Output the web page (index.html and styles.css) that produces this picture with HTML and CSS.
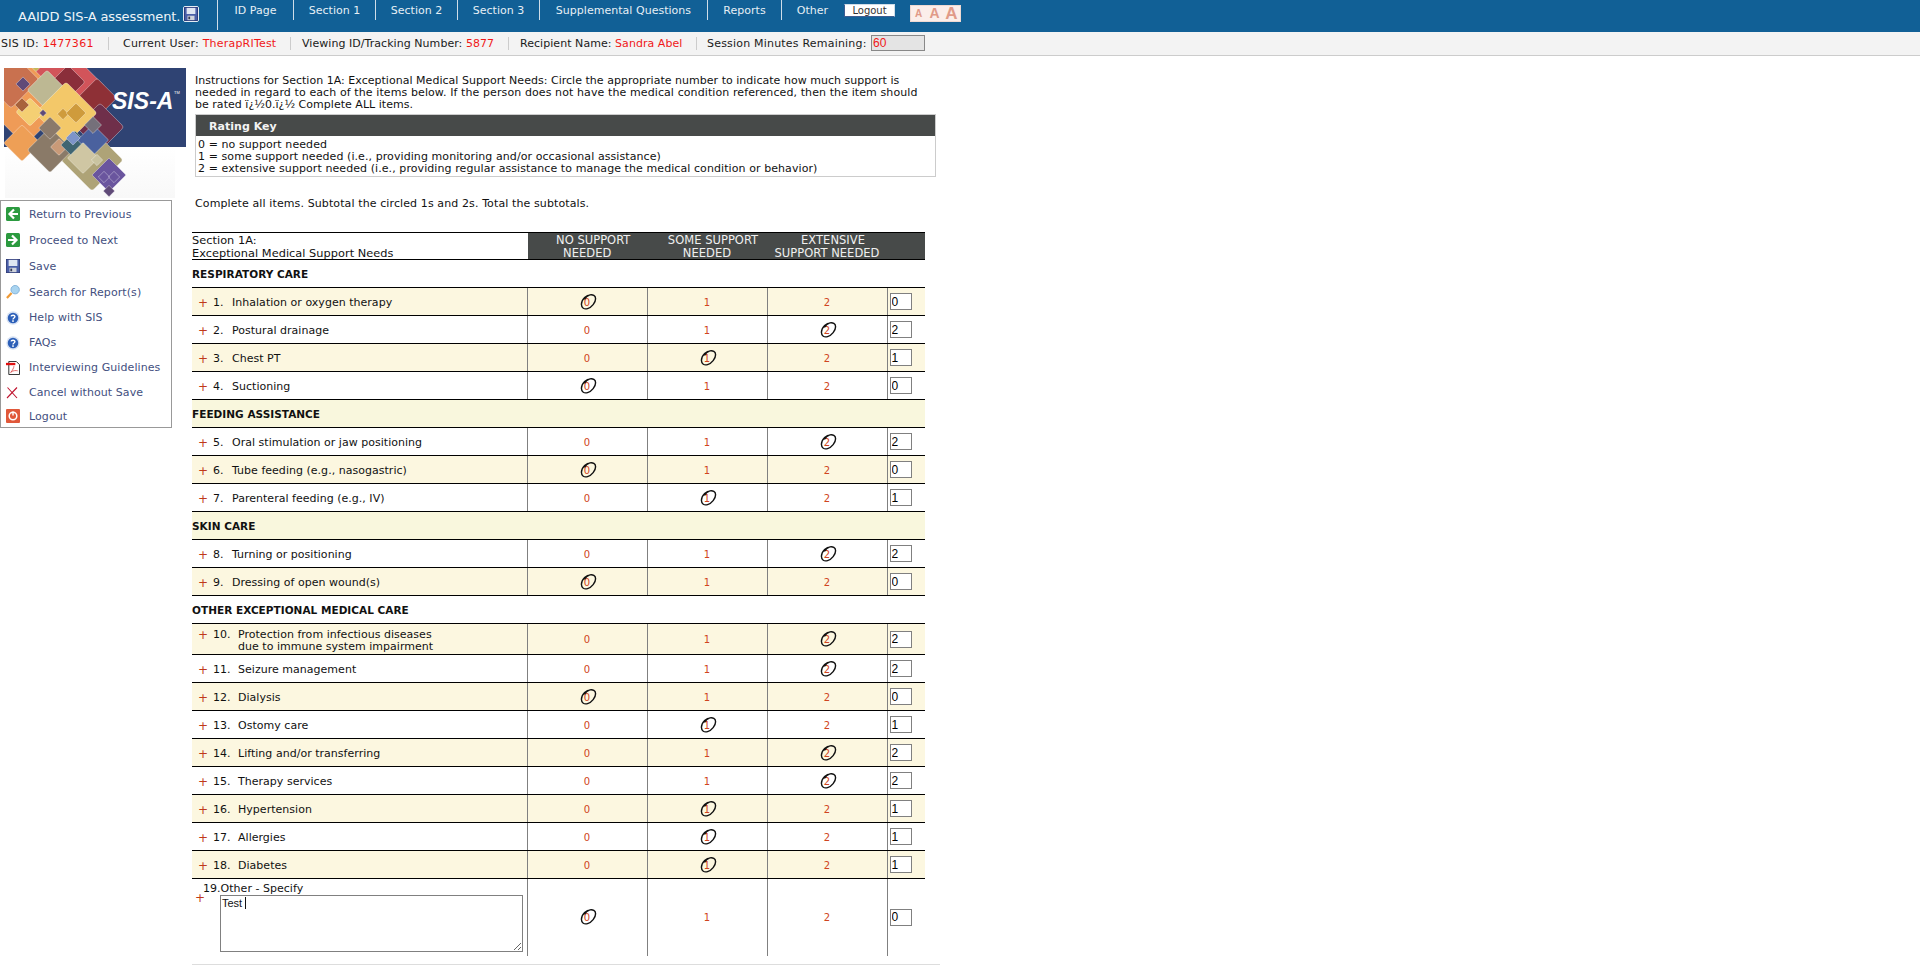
FILE: index.html
```html
<!DOCTYPE html>
<html lang="en">
<head>
<meta charset="utf-8">
<title>SIS-A Section 1A</title>
<link rel="stylesheet" href="styles.css">
</head>
<body>
<svg class="defs" width="0" height="0" aria-hidden="true">
  <symbol id="ring" viewBox="0 0 18 18">
    <path d="M12 1.500C7 .8 1.600 6 1.500 11.500 1.500 15.500 4.500 17 8 16 12.500 14.800 16.500 9.500 16.500 5.500 16.500 2.300 13.500 .8 10.500 1.500 8 2.200 6 4 4.800 6" fill="none" stroke="#111" stroke-width="1.500"/>
  </symbol>
  <symbol id="floppy" viewBox="0 0 16 16">
    <rect x=".5" y=".5" width="15" height="15" fill="#4a5fa8" stroke="#2d3a78"/>
    <rect x="3" y="1" width="10" height="7" fill="#dfe6f2"/>
    <rect x="4" y="10" width="8" height="5" fill="#cfd3dc"/>
    <rect x="5" y="11" width="2" height="3" fill="#333a55"/>
  </symbol>
  <symbol id="help" viewBox="0 0 16 16">
    <circle cx="8" cy="8" r="7.600" fill="#d5e0f2"/>
    <circle cx="8" cy="8" r="6" fill="#2c5fb8"/>
    <path d="M5.800 6.200C6 4.600 10.200 4.200 10.200 6.400 10.200 8 8 8 8 9.600" fill="none" stroke="#fff" stroke-width="1.600"/>
    <rect x="7.100" y="10.600" width="1.800" height="1.800" fill="#fff"/>
  </symbol>
</svg>

<header class="topbar">
  <div class="brand">AAIDD SIS-A assessment.<svg class="brand-icon"><use href="#floppy"/></svg></div>
  <nav class="nav">
    <a class="nav-item n1">ID Page</a>
    <a class="nav-item n2">Section 1</a>
    <a class="nav-item n2">Section 2</a>
    <a class="nav-item n2">Section 3</a>
    <a class="nav-item n3">Supplemental Questions</a>
    <a class="nav-item n4">Reports</a>
    <a class="nav-item n5">Other</a>
  </nav>
  <button class="logout-btn" type="button">Logout</button>
  <div class="sizes"><span class="sz s1">A</span><span class="sz s2">A</span><span class="sz s3">A</span></div>
</header>

<div class="infobar">
  <span class="info i1">SIS ID: <b>1477361</b></span>
  <span class="info i2">Current User: <b>TherapRITest</b></span>
  <span class="info i3">Viewing ID/Tracking Number: <b>5877</b></span>
  <span class="info i4">Recipient Name: <b>Sandra Abel</b></span>
  <span class="info i5">Session Minutes Remaining:</span>
  <input class="minutes" type="text" value="60" readonly>
</div>

<div class="page">
  <aside class="side">
    <svg class="logo" viewBox="0 0 182 130" width="182" height="130" role="img" aria-label="SIS-A logo">
      <defs>
        <linearGradient id="fade" x1="0" y1="0" x2="0" y2="1"><stop offset="0" stop-color="#fff"/><stop offset="1" stop-color="#f8f8f8"/></linearGradient>
      </defs>
      <rect x="1" y="79" width="170" height="51" fill="url(#fade)"/>
      <rect width="182" height="79" fill="#2f4373"/>
      <g stroke="#fff" stroke-opacity=".55" stroke-width=".6">
        <rect x="-14" y="-14" width="28" height="28" rx="3" transform="translate(28 4) rotate(45)" fill="#c5b85a"/>
        <rect x="-30" y="-30" width="60" height="60" rx="3" transform="translate(59 19) rotate(45)" fill="#d2545a"/>
        <rect x="-30" y="-30" width="60" height="60" rx="3" transform="translate(21 35) rotate(45)" fill="#ef9b57"/>
        <rect x="-20" y="-20" width="40" height="40" rx="3" transform="translate(7 12) rotate(45)" fill="#c9714f"/>
        <rect x="-5" y="-5" width="10" height="10" transform="translate(19 16) rotate(45)" fill="#5f4a78"/>
        <rect x="-12" y="-12" width="24" height="24" rx="2" transform="translate(64 14) rotate(45)" fill="#8a2e3a"/>
        <rect x="-14" y="-14" width="28" height="28" rx="2" transform="translate(93 30) rotate(45)" fill="#8e3036"/>
        <rect x="-14" y="-14" width="28" height="28" rx="2" transform="translate(43 22) rotate(45)" fill="#bdb893"/>
        <rect x="-17" y="-17" width="34" height="34" rx="3" transform="translate(96 59) rotate(45)" fill="#6f2f4a"/>
        <rect x="-22" y="-22" width="44" height="44" rx="3" transform="translate(62 45) rotate(45)" fill="#f3c869"/>
        <rect x="-10" y="-10" width="20" height="20" rx="2" transform="translate(26 44) rotate(45)" fill="#f4cf73"/>
        <rect x="-5" y="-5" width="10" height="10" transform="translate(18 37) rotate(45)" fill="#a8623c"/>
        <rect x="-2.500" y="-2.500" width="5" height="5" transform="translate(39 45) rotate(45)" fill="#5f4a78"/>
        <rect x="-4" y="-4" width="8" height="8" transform="translate(59 46) rotate(45)" fill="#cf9b3c"/>
        <rect x="-7" y="-7" width="14" height="14" rx="1" transform="translate(72 45) rotate(45)" fill="#cf9b3c"/>
        <rect x="-13" y="-13" width="26" height="26" rx="2" transform="translate(18 75) rotate(45)" fill="#ee9f56"/>
        <rect x="-22" y="-22" width="44" height="44" rx="3" transform="translate(88 92) rotate(45)" fill="#aea377"/>
        <rect x="-16" y="-16" width="32" height="32" rx="2" transform="translate(46 82) rotate(45)" fill="#8a7a68"/>
        <rect x="-8" y="-8" width="16" height="16" rx="1" transform="translate(46 60) rotate(45)" fill="#8b7a6b"/>
        <rect x="-6" y="-6" width="12" height="12" rx="1" transform="translate(55 79) rotate(45)" fill="#c99a78"/>
        <rect x="-10" y="-10" width="20" height="20" rx="1" transform="translate(71 77) rotate(45)" fill="#3f6572"/>
        <rect x="-11" y="-11" width="22" height="22" rx="1" transform="translate(89 72) rotate(45)" fill="#4a619e"/>
        <rect x="-5" y="-5" width="10" height="10" transform="translate(69 70) rotate(45)" fill="#7d94c9"/>
        <rect x="-6" y="-6" width="12" height="12" transform="translate(89 57) rotate(45)" fill="#75707a"/>
        <rect x="-11" y="-11" width="22" height="22" rx="1" transform="translate(79 90) rotate(45)" fill="#cfc6a3"/>
        <rect x="-4" y="-4" width="8" height="8" transform="translate(93 92) rotate(45)" fill="#c9c3a0"/>
        <rect x="-12" y="-12" width="24" height="24" rx="1" transform="translate(105 107) rotate(45)" fill="#6a559e"/>
        <rect x="-4" y="-4" width="8" height="8" transform="translate(100 109) rotate(45)" fill="none"/>
        <rect x="-4" y="-4" width="8" height="8" transform="translate(110 109) rotate(45)" fill="none"/>
        <rect x="-4" y="-4" width="8" height="8" transform="translate(105 123) rotate(45)" fill="#5f4a78"/>
      </g>
      <text x="108" y="41" class="logo-text">SIS-A</text>
      <text x="170" y="26" class="logo-tm">TM</text>
    </svg>
    <ul class="menu">
      <li class="m-item tall"><svg class="m-icon" viewBox="0 0 14 14"><rect width="14" height="14" rx="1.500" fill="#2b9a3f"/><path d="M8 2.500 3.500 7 8 11.500M4 7h8" fill="none" stroke="#fff" stroke-width="2.200"/></svg>Return to Previous</li>
      <li class="m-item tall"><svg class="m-icon" viewBox="0 0 14 14"><rect width="14" height="14" rx="1.500" fill="#2b9a3f"/><path d="M6 2.500 10.500 7 6 11.500M10 7H2" fill="none" stroke="#fff" stroke-width="2.200"/></svg>Proceed to Next</li>
      <li class="m-item tall"><svg class="m-icon"><use href="#floppy"/></svg>Save</li>
      <li class="m-item tall"><svg class="m-icon" viewBox="0 0 15 15"><path d="M1 14 6 8.500" stroke="#ef9a36" stroke-width="2.400"/><circle cx="9.800" cy="5" r="4.500" fill="#a9d4f0" stroke="#7fb0d8"/></svg>Search for Report(s)</li>
      <li class="m-item mid"><svg class="m-icon"><use href="#help"/></svg>Help with SIS</li>
      <li class="m-item mid"><svg class="m-icon"><use href="#help"/></svg>FAQs</li>
      <li class="m-item mid"><svg class="m-icon" viewBox="0 0 15 15"><path d="M3 .5H11L14.500 4V14.500H3Z" fill="#fff" stroke="#222"/><rect y="2" width="10" height="2.500" fill="#e01010"/><path d="M5 12.500C7 10 8.500 7 8.500 5.500M5 12C8 10 10.500 10 12.500 10.500" fill="none" stroke="#e05050" stroke-width=".9"/></svg>Interviewing Guidelines</li>
      <li class="m-item mid"><svg class="m-icon" viewBox="0 0 14 14"><path d="M1.500 1.500 11 12M11 1.500 1 12" fill="none" stroke="#c01530" stroke-width="1.100"/></svg>Cancel without Save</li>
      <li class="m-item last"><svg class="m-icon" viewBox="0 0 14 14"><rect width="14" height="14" rx="1" fill="#e0583a"/><circle cx="7" cy="7" r="3.800" fill="none" stroke="#fff" stroke-width="1.500"/><path d="M7 2.500V6.500" stroke="#fff" stroke-width="1.400"/></svg>Logout</li>
    </ul>
  </aside>

  <main class="content">
    <p class="intro">Instructions for Section 1A: Exceptional Medical Support Needs: Circle the appropriate number to indicate how much support is<br><span class="intro-wide">needed in regard to each of the items below. If the person does not have the medical condition referenced, then the item should</span><br>be rated ï¿½0.ï¿½ Complete ALL items.</p>
    <section class="key">
      <h2 class="key-head">Rating Key</h2>
      <div class="key-body">0 = no support needed<br>1 = some support needed (i.e., providing monitoring and/or occasional assistance)<br>2 = extensive support needed (i.e., providing regular assistance to manage the medical condition or behavior)</div>
    </section>
    <p class="complete">Complete all items. Subtotal the circled 1s and 2s. Total the subtotals.</p>

    <table class="grid">
      <colgroup><col class="c-label"><col class="c-opt"><col class="c-opt"><col class="c-opt"><col class="c-sub"></colgroup>
      <thead>
        <tr class="head">
          <th class="h-title">Section 1A:<br>Exceptional Medical Support Needs</th>
          <th class="h-first"><span class="lead">NO SUPPORT</span><br>NEEDED</th><th><span class="lead">SOME SUPPORT</span><br>NEEDED</th><th><span class="lead">EXTENSIVE</span><br>SUPPORT NEEDED</th><th></th>
        </tr>
      </thead>
      <tbody>
        <tr class="sec"><td colspan="5">RESPIRATORY CARE</td></tr>
        <tr class="row alt"><td class="lab"><span class="plus">+</span><span class="no">1.</span><span>Inhalation or oxygen therapy</span></td><td class="opt"><span class="num on">0<svg class="ring"><use href="#ring"/></svg></span></td><td class="opt"><span class="num">1</span></td><td class="opt"><span class="num">2</span></td><td class="sub"><input class="subtotal" type="text" value="0"></td></tr>
        <tr class="row"><td class="lab"><span class="plus">+</span><span class="no">2.</span><span>Postural drainage</span></td><td class="opt"><span class="num">0</span></td><td class="opt"><span class="num">1</span></td><td class="opt"><span class="num on">2<svg class="ring"><use href="#ring"/></svg></span></td><td class="sub"><input class="subtotal" type="text" value="2"></td></tr>
        <tr class="row alt"><td class="lab"><span class="plus">+</span><span class="no">3.</span><span>Chest PT</span></td><td class="opt"><span class="num">0</span></td><td class="opt"><span class="num on">1<svg class="ring"><use href="#ring"/></svg></span></td><td class="opt"><span class="num">2</span></td><td class="sub"><input class="subtotal" type="text" value="1"></td></tr>
        <tr class="row"><td class="lab"><span class="plus">+</span><span class="no">4.</span><span>Suctioning</span></td><td class="opt"><span class="num on">0<svg class="ring"><use href="#ring"/></svg></span></td><td class="opt"><span class="num">1</span></td><td class="opt"><span class="num">2</span></td><td class="sub"><input class="subtotal" type="text" value="0"></td></tr>
        <tr class="sec alt2"><td colspan="5">FEEDING ASSISTANCE</td></tr>
        <tr class="row"><td class="lab"><span class="plus">+</span><span class="no">5.</span><span>Oral stimulation or jaw positioning</span></td><td class="opt"><span class="num">0</span></td><td class="opt"><span class="num">1</span></td><td class="opt"><span class="num on">2<svg class="ring"><use href="#ring"/></svg></span></td><td class="sub"><input class="subtotal" type="text" value="2"></td></tr>
        <tr class="row alt"><td class="lab"><span class="plus">+</span><span class="no">6.</span><span>Tube feeding (e.g., nasogastric)</span></td><td class="opt"><span class="num on">0<svg class="ring"><use href="#ring"/></svg></span></td><td class="opt"><span class="num">1</span></td><td class="opt"><span class="num">2</span></td><td class="sub"><input class="subtotal" type="text" value="0"></td></tr>
        <tr class="row"><td class="lab"><span class="plus">+</span><span class="no">7.</span><span>Parenteral feeding (e.g., IV)</span></td><td class="opt"><span class="num">0</span></td><td class="opt"><span class="num on">1<svg class="ring"><use href="#ring"/></svg></span></td><td class="opt"><span class="num">2</span></td><td class="sub"><input class="subtotal" type="text" value="1"></td></tr>
        <tr class="sec alt2"><td colspan="5">SKIN CARE</td></tr>
        <tr class="row"><td class="lab"><span class="plus">+</span><span class="no">8.</span><span>Turning or positioning</span></td><td class="opt"><span class="num">0</span></td><td class="opt"><span class="num">1</span></td><td class="opt"><span class="num on">2<svg class="ring"><use href="#ring"/></svg></span></td><td class="sub"><input class="subtotal" type="text" value="2"></td></tr>
        <tr class="row alt"><td class="lab"><span class="plus">+</span><span class="no">9.</span><span>Dressing of open wound(s)</span></td><td class="opt"><span class="num on">0<svg class="ring"><use href="#ring"/></svg></span></td><td class="opt"><span class="num">1</span></td><td class="opt"><span class="num">2</span></td><td class="sub"><input class="subtotal" type="text" value="0"></td></tr>
        <tr class="sec"><td colspan="5">OTHER EXCEPTIONAL MEDICAL CARE</td></tr>
        <tr class="row alt two"><td class="lab"><span class="plus">+</span><span class="no wide">10.</span><span>Protection from infectious diseases<br>due to immune system impairment</span></td><td class="opt"><span class="num">0</span></td><td class="opt"><span class="num">1</span></td><td class="opt"><span class="num on">2<svg class="ring"><use href="#ring"/></svg></span></td><td class="sub"><input class="subtotal" type="text" value="2"></td></tr>
        <tr class="row"><td class="lab"><span class="plus">+</span><span class="no wide">11.</span><span>Seizure management</span></td><td class="opt"><span class="num">0</span></td><td class="opt"><span class="num">1</span></td><td class="opt"><span class="num on">2<svg class="ring"><use href="#ring"/></svg></span></td><td class="sub"><input class="subtotal" type="text" value="2"></td></tr>
        <tr class="row alt"><td class="lab"><span class="plus">+</span><span class="no wide">12.</span><span>Dialysis</span></td><td class="opt"><span class="num on">0<svg class="ring"><use href="#ring"/></svg></span></td><td class="opt"><span class="num">1</span></td><td class="opt"><span class="num">2</span></td><td class="sub"><input class="subtotal" type="text" value="0"></td></tr>
        <tr class="row"><td class="lab"><span class="plus">+</span><span class="no wide">13.</span><span>Ostomy care</span></td><td class="opt"><span class="num">0</span></td><td class="opt"><span class="num on">1<svg class="ring"><use href="#ring"/></svg></span></td><td class="opt"><span class="num">2</span></td><td class="sub"><input class="subtotal" type="text" value="1"></td></tr>
        <tr class="row alt"><td class="lab"><span class="plus">+</span><span class="no wide">14.</span><span>Lifting and/or transferring</span></td><td class="opt"><span class="num">0</span></td><td class="opt"><span class="num">1</span></td><td class="opt"><span class="num on">2<svg class="ring"><use href="#ring"/></svg></span></td><td class="sub"><input class="subtotal" type="text" value="2"></td></tr>
        <tr class="row"><td class="lab"><span class="plus">+</span><span class="no wide">15.</span><span>Therapy services</span></td><td class="opt"><span class="num">0</span></td><td class="opt"><span class="num">1</span></td><td class="opt"><span class="num on">2<svg class="ring"><use href="#ring"/></svg></span></td><td class="sub"><input class="subtotal" type="text" value="2"></td></tr>
        <tr class="row alt"><td class="lab"><span class="plus">+</span><span class="no wide">16.</span><span>Hypertension</span></td><td class="opt"><span class="num">0</span></td><td class="opt"><span class="num on">1<svg class="ring"><use href="#ring"/></svg></span></td><td class="opt"><span class="num">2</span></td><td class="sub"><input class="subtotal" type="text" value="1"></td></tr>
        <tr class="row"><td class="lab"><span class="plus">+</span><span class="no wide">17.</span><span>Allergies</span></td><td class="opt"><span class="num">0</span></td><td class="opt"><span class="num on">1<svg class="ring"><use href="#ring"/></svg></span></td><td class="opt"><span class="num">2</span></td><td class="sub"><input class="subtotal" type="text" value="1"></td></tr>
        <tr class="row alt"><td class="lab"><span class="plus">+</span><span class="no wide">18.</span><span>Diabetes</span></td><td class="opt"><span class="num">0</span></td><td class="opt"><span class="num on">1<svg class="ring"><use href="#ring"/></svg></span></td><td class="opt"><span class="num">2</span></td><td class="sub"><input class="subtotal" type="text" value="1"></td></tr>
        <tr class="row other">
          <td class="lab-other">
            <span class="plus">+</span>
            <div class="other-box">
              <div class="other-title">19.Other - Specify</div>
              <div class="ta-wrap"><textarea class="specify">Test</textarea><span class="caret"></span></div>
            </div>
          </td>
          <td class="opt"><span class="num on">0<svg class="ring"><use href="#ring"/></svg></span></td><td class="opt"><span class="num">1</span></td><td class="opt"><span class="num">2</span></td><td class="sub"><input class="subtotal" type="text" value="0"></td>
        </tr>
      </tbody>
    </table>
    <div class="endline"></div>
  </main>
</div>
</body>
</html>
```

FILE: styles.css
```css
* { box-sizing: border-box; }
html, body { margin: 0; padding: 0; }
body {
  height: 966px;
  overflow: hidden;
  background: #fff;
  color: #111;
  font-family: "DejaVu Sans", Verdana, sans-serif;
  font-size: 11px;
  letter-spacing: .025px;
}
.defs { position: absolute; }

/* top bar */
.topbar {
  height: 32px;
  background: #116096;
  color: #fff;
  display: flex;
  align-items: flex-start;
}
.brand {
  width: 217px;
  padding: 8px 0 0 18px;
  font-size: 13px;
  letter-spacing: -.12px;
  line-height: 18px;
  color: #eef4f8;
  display: flex;
  white-space: nowrap;
}
.brand-icon {
  width: 16px;
  height: 16px;
  margin: -2px 0 0 3px;
  flex: none;
  border: 1px solid #e4ecf3;
  border-radius: 2px;
}
.nav { display: flex; }
.nav-item {
  height: 20px;
  padding-top: 1px;
  line-height: 19px;
  border-left: 1px solid #cfdde8;
  text-align: center;
  color: #e6eff5;
  white-space: nowrap;
}
.nav-item:first-child { height: 30px; }
.n1 { width: 76px; }
.n2 { width: 82px; }
.n3 { width: 168px; }
.n4 { width: 74px; }
.n5 { width: 62px; }
.logout-btn {
  width: 51px;
  height: 13px;
  margin: 4px 0 0 1px;
  padding: 0;
  background: #fff;
  border: 1px solid #3d5d92;
  border-right-color: #cfdde8;
  border-top-color: #cfdde8;
  font: 10px/11px "DejaVu Sans", sans-serif;
  color: #333;
}
.sizes {
  display: flex;
  align-items: flex-end;
  margin: 5px 0 0 15px;
  width: 51px;
  height: 17px;
  background: #fbeeea;
  border: 1px solid #eed9d2;
  font-family: "Liberation Sans", sans-serif;
  font-weight: bold;
  color: #e09a88;
}
.sz { display: block; text-align: center; line-height: 15px; }
.s1 { width: 15px; font-size: 10px; }
.s2 { width: 17px; font-size: 14px; }
.s3 { width: 17px; font-size: 17px; }

/* info bar */
.infobar {
  height: 24px;
  background: #f3f3f3;
  border-bottom: 1px solid #ccc;
  display: flex;
  align-items: center;
  white-space: nowrap;
}
.info {
  height: 13px;
  line-height: 13px;
  color: #1a1a1a;
  border-right: 1px solid #ccc;
}
.info b { font-weight: normal; color: #f01818; }
.i1 { width: 109px; padding-left: 1px; letter-spacing: .27px; }
.i2 { width: 182px; padding-left: 14px; letter-spacing: .2px; }
.i3 { width: 218px; padding-left: 11px; letter-spacing: .05px; }
.i4 { width: 188px; padding-left: 11px; letter-spacing: .05px; }
.i5 { width: 174px; padding-left: 10px; border-right: 0; letter-spacing: .2px; }
.minutes {
  width: 54px;
  height: 16px;
  margin-top: -1px;
  padding: 0 1px;
  background: #e4e4e4;
  border: 1px solid #888;
  color: #f01818;
  font: 12px "Liberation Sans", sans-serif;
}

/* page */
.page { display: flex; align-items: flex-start; }
.side { width: 192px; flex: none; padding-top: 12px; }
.logo { display: block; margin-left: 4px; }
.logo-text { font: italic bold 23px "Liberation Sans", sans-serif; fill: #fff; }
.logo-tm { font: 4px "Liberation Sans", sans-serif; fill: #fff; }
.menu {
  list-style: none;
  width: 172px;
  margin: 2px 0 0;
  padding: 0;
  background: #fff;
  border: 1px solid #999;
  color: #434f80;
  letter-spacing: .08px;
  white-space: nowrap;
}
.m-item { display: flex; align-items: center; padding-left: 5px; }
.tall { height: 26px; }
.mid { height: 25px; }
.last { height: 22px; }
.m-icon { width: 14px; height: 14px; margin: 0 9px 0 0; flex: none; }

/* content */
.content { width: 760px; padding-top: 19px; }
.intro {
  margin: 0 0 0 3px;
  line-height: 12px;
  white-space: nowrap;
}
.intro-wide { letter-spacing: .1px; }
.key {
  width: 741px;
  height: 63px;
  margin: 3px 0 0 3px;
  border: 1px solid #ccc;
}
.key-head {
  margin: 0;
  height: 21px;
  padding-left: 13px;
  background: #474a49;
  color: #f4f4f4;
  font-size: 11px;
  font-weight: bold;
  line-height: 23px;
}
.key-body {
  padding: 3px 0 0 2px;
  line-height: 12px;
  letter-spacing: .08px;
  white-space: nowrap;
}
.complete {
  margin: 21px 0 0 3px;
  line-height: 12px;
  letter-spacing: .11px;
}

/* table */
.grid {
  width: 733px;
  margin-top: 22px;
  table-layout: fixed;
  border-collapse: collapse;
}
.c-label { width: 335px; }
.c-opt { width: 120px; }
.c-sub { width: 38px; }
.head th {
  padding: 1px 0 0;
  background: #474a49;
  color: #f0f0f0;
  font-size: 11.500px;
  font-weight: normal;
  line-height: 12.500px;
  border-top: 1px solid #000;
  border-bottom: 1px solid #000;
  vertical-align: middle;
  white-space: nowrap;
}
.head .h-title {
  background: #fff;
  color: #111;
  text-align: left;
  font-size: 11.350px;
}
.head .h-first { border-left: 1px solid #fff; }
.lead { padding-left: 12px; }
.sec { height: 28px; }
.sec td {
  padding: 1px 0 0;
  border-bottom: 1px solid #000;
  font-weight: bold;
  font-size: 10.500px;
}
.alt2 td { background: #f9f7dd; }
.row { height: 28px; }
.row td { border-bottom: 1px solid #000; padding: 0; }
.row td.lab { padding-top: 3px; }
.row td.opt { padding-top: 1px; }
.alt td { background: #fcf7e0; }
.row.two { height: 31px; }
.lab { white-space: nowrap; }
.lab > span { display: inline-block; vertical-align: top; line-height: 12px; }
.plus {
  width: 21px;
  padding-left: 6px;
  color: #c0391b;
  font-size: 12px;
  line-height: 12px;
}
.no { width: 19px; }
.no.wide { width: 25px; }
.opt { text-align: center; border-left: 1px solid #808080; }
.num { position: relative; display: inline-block; color: #cf4420; font-size: 10px; line-height: 12px; }
.ring {
  position: absolute;
  left: 50%;
  top: 50%;
  width: 17px;
  height: 18px;
  margin: -10px 0 0 -7px;
}
.sub { border-left: 1px solid #808080; }
.subtotal {
  display: block;
  width: 22px;
  height: 17px;
  margin: 0 0 0 2px;
  padding: 0 1px;
  border: 1px solid #808080;
  background: #fff;
  color: #000;
  font: 12px "Liberation Sans", sans-serif;
}
.row.other { height: 77px; }
.row.other td { border-bottom: 0; }
.lab-other { display: flex; }
.lab-other .plus { width: 11px; padding: 13px 0 0 3px; flex: none; }
.other-box { margin-top: 4px; }
.other-title { height: 12px; line-height: 12px; }
.ta-wrap { position: relative; margin: 0 0 0 17px; width: 303px; }
.specify {
  display: block;
  width: 303px;
  height: 57px;
  padding: 1px 1px;
  border: 1px solid #808080;
  font: 11px/13px "Liberation Sans", sans-serif;
  color: #111;
  outline: none;
}
.caret {
  position: absolute;
  left: 25px;
  top: 2px;
  width: 1px;
  height: 12px;
  background: #111;
}
.endline { width: 748px; height: 1px; margin-top: 8px; background: #ddd; }
```
